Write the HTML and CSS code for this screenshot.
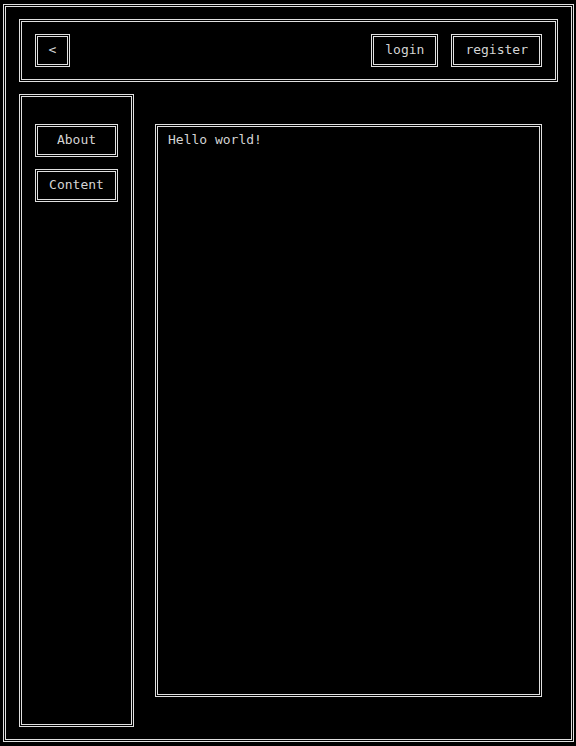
FILE: index.html
```html
<!DOCTYPE html>
<html>
<head>
<meta charset="utf-8">
<link rel="stylesheet" href="styles.css">
</head>
<body>
<div class="app">
  <header class="topbar">
    <button class="btn btn-back">&lt;</button>
    <div class="spacer"></div>
    <button class="btn">login</button>
    <button class="btn">register</button>
  </header>
  <div class="body-row">
    <nav class="sidebar">
      <button class="btn">About</button>
      <button class="btn">Content</button>
    </nav>
    <div class="main-wrap">
      <main class="main">Hello world!</main>
    </div>
  </div>
</div>
</body>
</html>
```

FILE: styles.css
```css
* { box-sizing: border-box; }
html, body { margin: 0; padding: 0; background: #000; }
body {
  font-family: "DejaVu Sans Mono", "Liberation Mono", monospace;
  font-size: 13px;
  color: #d4d4d4;
}
.app {
  margin: 4px 0 0 3px;
  width: 571px;
  height: 738px;
  border: 3px double #e0e0e0;
  padding: 12px 13px;
  display: flex;
  flex-direction: column;
  gap: 12px;
}
.topbar {
  height: 63px;
  border: 3px double #e0e0e0;
  padding: 12px 13px;
  display: flex;
  align-items: center;
  gap: 13px;
}
.spacer { flex: 1; }
.btn {
  font: inherit;
  color: #d4d4d4;
  background: #000;
  border: 3px double #e0e0e0;
  height: 33px;
  line-height: 15px;
  padding: 5px 11px 7px;
  margin: 0;
  border-radius: 0;
  text-align: center;
}
.btn-back {
  width: 35px;
  padding-left: 0;
  padding-right: 0;
}
.body-row {
  flex: 1;
  display: flex;
  min-height: 0;
}
.sidebar {
  width: 115px;
  border: 3px double #e0e0e0;
  padding: 27px 13px;
  display: flex;
  flex-direction: column;
  gap: 12px;
}
.sidebar .btn { width: 100%; }
.main-wrap {
  flex: 1;
  padding: 30px 16px 30px 21px;
  display: flex;
}
.main {
  flex: 1;
  border: 3px double #e0e0e0;
  padding: 5px 10px;
  line-height: 15px;
}
```
